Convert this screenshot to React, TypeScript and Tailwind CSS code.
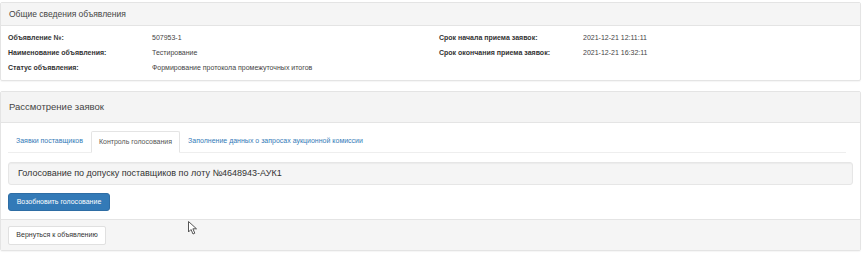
const INFO_LEFT = [
  { label: 'Объявление №:', value: '507953-1' },
  { label: 'Наименование объявления:', value: 'Тестирование' },
  { label: 'Статус объявления:', value: 'Формирование протокола промежуточных итогов' },
]

const INFO_RIGHT = [
  { label: 'Срок начала приема заявок:', value: '2021-12-21 12:11:11' },
  { label: 'Срок окончания приема заявок:', value: '2021-12-21 16:32:11' },
]

const TABS = ['Заявки поставщиков', 'Контроль голосования', 'Заполнение данных о запросах аукционной комиссии']

function InfoRows({ rows }: { rows: { label: string; value: string }[] }) {
  return (
    <div className="flex flex-col">
      {rows.map(({ label, value }) => (
        <div key={label} className="flex h-[15px] items-center text-[7px] text-[#333]">
          <span className="w-[144px] font-bold">{label}</span>
          <span className="text-[#444]">{value}</span>
        </div>
      ))}
    </div>
  )
}

export default function App() {
  return (
    <div className="relative h-[254px] w-[863px] bg-white pt-[2px] pr-[2px] font-['Liberation_Sans',Arial,sans-serif]">
      <section className="rounded-[2px] border border-[#e4e4e4] shadow-[0_1px_1px_rgba(0,0,0,0.04)]">
        <div className="flex h-[23px] items-center border-b border-[#e4e4e4] bg-[#f5f5f5] px-[8px] text-[8.5px] text-[#444]">
          Общие сведения объявления
        </div>
        <div className="grid grid-cols-[431px_1fr] px-[7px] pt-[5px] pb-[4px]">
          <InfoRows rows={INFO_LEFT} />
          <InfoRows rows={INFO_RIGHT} />
        </div>
      </section>

      <section className="mt-[10px] rounded-[2px] border border-[#e4e4e4] shadow-[0_1px_1px_rgba(0,0,0,0.04)]">
        <div className="flex h-[31px] items-center border-b border-[#e4e4e4] bg-[#f4f4f4] px-[8px] text-[9.5px] text-[#444]">
          Рассмотрение заявок
        </div>
        <div className="px-[7px] pt-[8px] pb-[8px]">
          <div className="mr-[7px] flex h-[22px] border-b border-[#eee]">
            {TABS.map((t, i) => (
              <div
                key={t}
                className={
                  i === 1
                    ? '-mb-px flex items-center rounded-t-[2px] border border-[#e4e4e4] border-b-white bg-white px-[7px] text-[7px] text-[#555]'
                    : 'flex items-center px-[8px] text-[7px] text-[#337ab7]'
                }
              >
                {t}
              </div>
            ))}
          </div>
          <div className="mt-[9px] flex h-[23px] items-center rounded-[3px] border border-[#e6e6e6] bg-[#f5f5f5] px-[9px] text-[9px] text-[#333] shadow-[inset_0_1px_1px_rgba(0,0,0,0.04)]">
            Голосование по допуску поставщиков по лоту №4648943-АУК1
          </div>
          <button className="mt-[8px] flex h-[18px] w-[102px] items-center justify-center rounded-[3px] border border-[#2e6da4] bg-[#337ab7] text-[7px] text-white">
            Возобновить голосование
          </button>
        </div>
        <div className="flex h-[31px] items-center border-t border-[#e4e4e4] bg-[#f5f5f5] px-[7px]">
          <button className="flex h-[19px] w-[98px] items-center justify-center rounded-[2px] border border-[#e0e0e0] bg-white text-[7px] text-[#333]">
            Вернуться к объявлению
          </button>
        </div>
      </section>

      <svg className="absolute left-[188px] top-[221px]" width="10" height="14" viewBox="0 0 10 14">
        <path d="M0.5 0.5 L0.5 11 L3 8.5 L5 13 L6.8 12.2 L4.9 7.8 L8.5 7.8 Z" fill="white" stroke="#555" strokeWidth="1" strokeLinejoin="round" />
      </svg>
    </div>
  )
}
